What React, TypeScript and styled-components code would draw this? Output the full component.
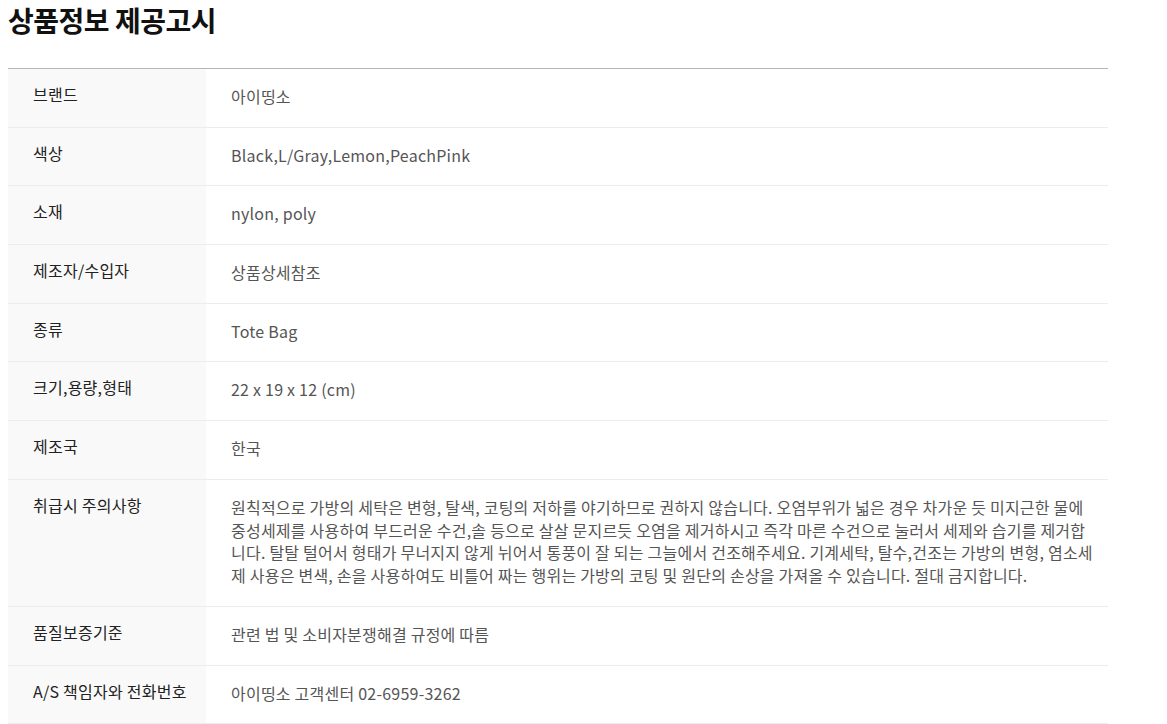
import React from "react";
import styled, { createGlobalStyle } from "styled-components";

const GlobalStyle = createGlobalStyle`
  html, body { margin: 0; padding: 0; background: #fff; }
  body { font-family: "Noto Sans CJK KR", "Noto Sans", sans-serif; }
`;

const Page = styled.div`
  padding: 4px 8px 0 8px;
  width: 1100px;
`;

const Title = styled.h2`
  margin: 0;
  font-size: 28px;
  font-weight: 700;
  line-height: 32px;
  letter-spacing: -0.5px;
  color: #111;
`;

const Table = styled.div`
  margin-top: 32px;
  border-top: 1px solid #b5b5b5;
  display: flex;
  flex-direction: column;
`;

const Row = styled.div`
  display: grid;
  grid-template-columns: 198px 1fr;
  border-bottom: 1px solid #ececec;
`;

const Label = styled.div`
  background: #f9f9f9;
  padding: 14px 10px 0 25px;
  font-size: 16px;
  line-height: 22.8px;
  letter-spacing: 0.25px;
  color: #222;
`;

const Value = styled.div`
  padding: 16px 4px 18.9px 25px;
  font-size: 16px;
  line-height: 22.8px;
  letter-spacing: 0.23px;
  color: #555;
  white-space: nowrap;
`;

const care = [
  "원칙적으로 가방의 세탁은 변형, 탈색, 코팅의 저하를 야기하므로 권하지 않습니다. 오염부위가 넓은 경우 차가운 듯 미지근한 물에",
  "중성세제를 사용하여 부드러운 수건,솔 등으로 살살 문지르듯 오염을 제거하시고 즉각 마른 수건으로 눌러서 세제와 습기를 제거합",
  "니다. 탈탈 털어서 형태가 무너지지 않게 뉘어서 통풍이 잘 되는 그늘에서 건조해주세요. 기계세탁, 탈수,건조는 가방의 변형, 염소세",
  "제 사용은 변색, 손을 사용하여도 비틀어 짜는 행위는 가방의 코팅 및 원단의 손상을 가져올 수 있습니다. 절대 금지합니다.",
];

const rows: [string, React.ReactNode][] = [
  ["브랜드", "아이띵소"],
  ["색상", "Black,L/Gray,Lemon,PeachPink"],
  ["소재", "nylon, poly"],
  ["제조자/수입자", "상품상세참조"],
  ["종류", "Tote Bag"],
  ["크기,용량,형태", "22 x 19 x 12 (cm)"],
  ["제조국", "한국"],
  [
    "취급시 주의사항",
    care.map((line, i) => (
      <React.Fragment key={i}>
        {line}
        {i < care.length - 1 && <br />}
      </React.Fragment>
    )),
  ],
  ["품질보증기준", "관련 법 및 소비자분쟁해결 규정에 따름"],
  ["A/S 책임자와 전화번호", "아이띵소 고객센터 02-6959-3262"],
];

export default function App() {
  return (
    <>
      <GlobalStyle />
      <Page>
        <Title>상품정보 제공고시</Title>
        <Table>
          {rows.map(([k, v]) => (
            <Row key={k}>
              <Label>{k}</Label>
              <Value>{v}</Value>
            </Row>
          ))}
        </Table>
      </Page>
    </>
  );
}
